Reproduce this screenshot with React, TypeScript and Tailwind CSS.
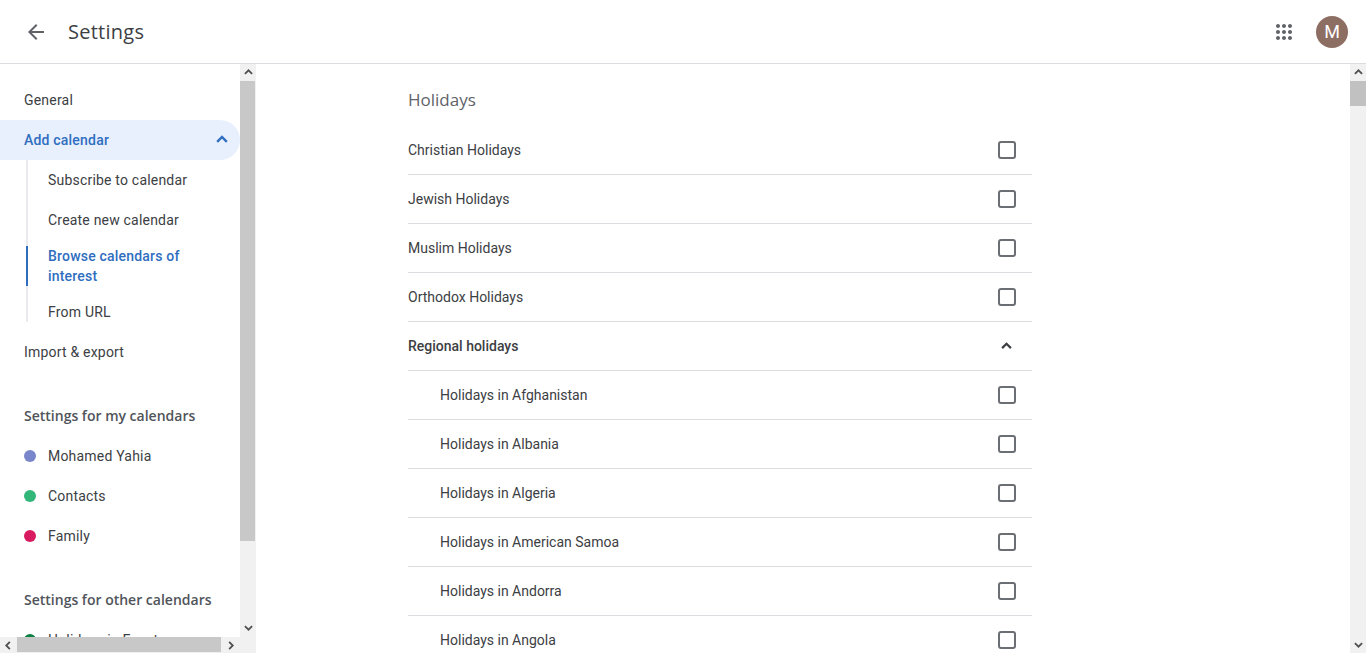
import React from 'react';

const topRows = ['Christian Holidays', 'Jewish Holidays', 'Muslim Holidays', 'Orthodox Holidays'];
const regionRows = [
  'Holidays in Afghanistan',
  'Holidays in Albania',
  'Holidays in Algeria',
  'Holidays in American Samoa',
  'Holidays in Andorra',
  'Holidays in Angola',
];

function Chevron({ dir = 'up', className = '' }: { dir?: 'up' | 'down' | 'left' | 'right'; className?: string }) {
  const points = {
    up: 'M1 6.5 L5 2.5 L9 6.5',
    down: 'M1 3.5 L5 7.5 L9 3.5',
    left: 'M6.5 1 L2.5 5 L6.5 9',
    right: 'M3.5 1 L7.5 5 L3.5 9',
  }[dir];
  return (
    <svg viewBox="0 0 10 10" className={className} fill="none" stroke="currentColor" strokeWidth="2">
      <path d={points} />
    </svg>
  );
}

function Checkbox() {
  return <div className="w-[18px] h-[18px] rounded-[3px] border-2 border-[#6b6e72]" />;
}

function CalendarItem({ color, label }: { color: string; label: string }) {
  return (
    <div className="h-10 flex items-center pl-6">
      <span className={`w-3 h-3 rounded-full mr-3 ${color}`} />
      <span>{label}</span>
    </div>
  );
}

export default function App() {
  return (
    <div className="h-[653px] w-[1366px] overflow-hidden flex flex-col bg-white font-['Roboto',sans-serif] text-[14px] leading-5 text-[#3c4043]">
      {/* Header */}
      <header className="h-16 shrink-0 flex items-center border-b border-[#dadce0] pl-6 pr-[18px]">
        <svg viewBox="0 0 24 24" className="w-6 h-6 text-[#5f6368]" fill="currentColor">
          <path d="M20 11H7.83l5.59-5.59L12 4l-8 8 8 8 1.41-1.41L7.83 13H20v-2z" />
        </svg>
        <h1 className="ml-5 text-[20px] font-['Open_Sans',sans-serif] text-[#3c4043] tracking-[0.25px]">Settings</h1>
        <div className="ml-auto flex items-center gap-5">
          <svg viewBox="0 0 24 24" className="w-6 h-6 text-[#5f6368]" fill="currentColor">
            <path d="M6 8c1.1 0 2-.9 2-2s-.9-2-2-2-2 .9-2 2 .9 2 2 2zm6 12c1.1 0 2-.9 2-2s-.9-2-2-2-2 .9-2 2 .9 2 2 2zm-6 0c1.1 0 2-.9 2-2s-.9-2-2-2-2 .9-2 2 .9 2 2 2zm0-6c1.1 0 2-.9 2-2s-.9-2-2-2-2 .9-2 2 .9 2 2 2zm6 0c1.1 0 2-.9 2-2s-.9-2-2-2-2 .9-2 2 .9 2 2 2zm4-8c0 1.1.9 2 2 2s2-.9 2-2-.9-2-2-2-2 .9-2 2zm-4 2c1.1 0 2-.9 2-2s-.9-2-2-2-2 .9-2 2 .9 2 2 2zm6 6c1.1 0 2-.9 2-2s-.9-2-2-2-2 .9-2 2 .9 2 2 2zm0 6c1.1 0 2-.9 2-2s-.9-2-2-2-2 .9-2 2 .9 2 2 2z" />
          </svg>
          <div className="w-8 h-8 rounded-full bg-[#8d6e63] text-white flex items-center justify-center text-[18px]">M</div>
        </div>
      </header>

      <div className="flex-1 min-h-0 flex">
        {/* Sidebar */}
        <aside className="w-64 shrink-0 flex">
          <div className="w-60 flex flex-col">
            <nav className="flex-1 min-h-0 overflow-hidden pt-4 tracking-[0.2px]">
              <div className="h-10 flex items-center pl-6">General</div>
              <div className="h-10 flex items-center justify-between pl-6 pr-[12px] rounded-r-full bg-[#e8f0fe] font-medium">
                <span className="text-[#2f6ebf]">Add calendar</span>
                <Chevron dir="up" className="w-[12px] h-[12px] text-[#2f6ebf]" />
              </div>
              <div className="ml-[26px] border-l-2 border-[#e8eaed] h-[162px]">
                <div className="h-10 flex items-center pl-5">Subscribe to calendar</div>
                <div className="h-10 flex items-center pl-5">Create new calendar</div>
                <div className="relative py-[6px] pl-5 pr-6 text-[#2f6ebf] font-medium">
                  <span className="absolute -left-[2px] top-[6px] h-10 w-[2px] bg-[#2f6ebf]" />
                  Browse calendars of interest
                </div>
                <div className="h-10 flex items-center pl-5">From URL</div>
              </div>
              <div className="h-10 mt-[10px] flex items-center pl-6">Import &amp; export</div>
              <div className="h-10 mt-6 flex items-center pl-6 font-['Open_Sans',sans-serif] text-[14px] font-semibold tracking-normal text-[#50545a]">Settings for my calendars</div>
              <CalendarItem color="bg-[#7986cb]" label="Mohamed Yahia" />
              <CalendarItem color="bg-[#33b679]" label="Contacts" />
              <CalendarItem color="bg-[#d81b60]" label="Family" />
              <div className="h-10 mt-6 flex items-center pl-6 font-['Open_Sans',sans-serif] text-[14px] font-semibold tracking-normal text-[#50545a]">Settings for other calendars</div>
              <CalendarItem color="bg-[#0b8043]" label="Holidays in Egypt" />
            </nav>
            {/* Horizontal scrollbar */}
            <div className="h-4 shrink-0 flex items-center bg-[#f1f1f1] text-[#505050]">
              <div className="w-[17px] flex justify-center"><Chevron dir="left" className="w-[9px] h-[9px]" /></div>
              <div className="w-[204px] h-[15px] self-start bg-[#c8c8c8]" />
              <div className="flex-1 flex justify-center"><Chevron dir="right" className="w-[9px] h-[9px]" /></div>
            </div>
          </div>
          {/* Vertical scrollbar */}
          <div className="w-4 flex flex-col bg-[#f1f1f1] text-[#505050]">
            <div className="h-[17px] flex items-center justify-center"><Chevron dir="up" className="w-[9px] h-[9px]" /></div>
            <div className="h-[460px] w-[15px] bg-[#c8c8c8]" />
            <div className="h-[92px] pt-[82px] flex justify-center"><Chevron dir="down" className="w-[9px] h-[9px]" /></div>
          </div>
        </aside>

        {/* Main */}
        <main className="flex-1 min-w-0 overflow-hidden pl-[152px] pt-4">
          <div className="w-[624px]">
            <h2 className="h-10 flex items-center text-[17px] font-['Open_Sans',sans-serif] text-[#5f6368] mb-[6px]">Holidays</h2>
            {topRows.map((r) => (
              <div key={r} className="h-[49px] flex items-center justify-between border-b border-[#dadce0] pr-4">
                <span>{r}</span>
                <Checkbox />
              </div>
            ))}
            <div className="h-[49px] flex items-center justify-between border-b border-[#dadce0] pr-5 font-medium">
              <span>Regional holidays</span>
              <Chevron dir="up" className="w-[11px] h-[11px]" />
            </div>
            {regionRows.map((r) => (
              <div key={r} className="h-[49px] flex items-center justify-between border-b border-[#dadce0] pl-8 pr-4">
                <span>{r}</span>
                <Checkbox />
              </div>
            ))}
          </div>
        </main>

        {/* Page scrollbar */}
        <div className="w-4 shrink-0 flex flex-col bg-[#f1f1f1] text-[#505050]">
          <div className="h-[17px] flex items-center justify-center"><Chevron dir="up" className="w-[9px] h-[9px]" /></div>
          <div className="h-[25px] bg-[#c1c1c1]" />
          <div className="flex-1" />
          <div className="h-[17px] flex items-center justify-center"><Chevron dir="down" className="w-[9px] h-[9px]" /></div>
        </div>
      </div>
    </div>
  );
}
